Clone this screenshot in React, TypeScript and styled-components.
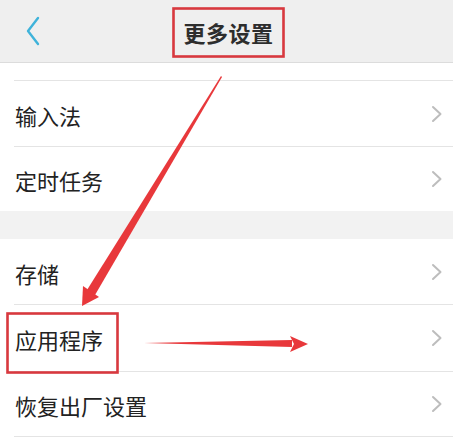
import React from "react";
import styled, { createGlobalStyle } from "styled-components";

const Global = createGlobalStyle`
  html, body { margin: 0; padding: 0; background: #ffffff; }
  body { font-family: "Noto Sans CJK SC", "Noto Sans", sans-serif; }
  * { box-sizing: border-box; }
`;

const Page = styled.div`
  position: relative;
  width: 453px;
  height: 439px;
  overflow: hidden;
  background: #ffffff;
`;

const Header = styled.header`
  height: 63px;
  background: #efefef;
  border-bottom: 1px solid #dcdcdc;
  display: flex;
  align-items: center;
  justify-content: center;
  position: relative;
`;

const Back = styled.button`
  position: absolute;
  left: 18px;
  top: 14px;
  width: 30px;
  height: 34px;
  border: none;
  background: transparent;
  padding: 0;
  display: flex;
  align-items: center;
  justify-content: center;
`;

const Title = styled.h1`
  margin: 0;
  margin-top: 1px;
  margin-left: 4px;
  font-size: 22px;
  font-weight: 700;
  color: #2d2d2d;
  letter-spacing: 0.5px;
`;

const Group = styled.section`
  background: #ffffff;
  padding-left: 14px;
`;

const Spacer = styled.div<{ $h: number }>`
  height: ${(p) => p.$h}px;
  background: ${(p) => (p.$h > 20 ? "#f2f2f2" : "#ffffff")};
`;

const Row = styled.div<{ $h: number; $last?: boolean; $first?: boolean }>`
  height: ${(p) => p.$h}px;
  display: flex;
  align-items: center;
  justify-content: space-between;
  padding-right: 9px;
  border-top: ${(p) => (p.$first ? "none" : "1px solid #e4e4e4")};
  ${(p) => (p.$last ? "border-bottom: 1px solid #e4e4e4;" : "")}
`;

const Label = styled.span`
  font-size: 22px;
  color: #222222;
  padding-left: 1px;
  margin-top: 2px;
`;

const Chevron = () => (
  <svg width="14" height="20" viewBox="0 0 14 20">
    <path d="M3 3 L10.5 10 L3 17" fill="none" stroke="#bdbdbd" strokeWidth="2" strokeLinecap="round" strokeLinejoin="round" />
  </svg>
);

const Overlay = styled.svg`
  position: absolute;
  left: 0;
  top: 0;
  pointer-events: none;
`;

export default function App() {
  return (
    <Page>
      <Global />
      <Header>
        <Back aria-label="返回">
          <svg width="20" height="30" viewBox="0 0 20 30">
            <path d="M15 2 L5 15 L15 28" fill="none" stroke="#3fb3da" strokeWidth="2.4" strokeLinecap="round" strokeLinejoin="round" />
          </svg>
        </Back>
        <Title>更多设置</Title>
      </Header>
      <Spacer $h={17} />
      <Group>
        <Row $h={66}><Label>输入法</Label><Chevron /></Row>
        <Row $h={65}><Label>定时任务</Label><Chevron /></Row>
      </Group>
      <Spacer $h={28} />
      <Group>
        <Row $h={65} $first><Label>存储</Label><Chevron /></Row>
        <Row $h={67}><Label>应用程序</Label><Chevron /></Row>
        <Row $h={66} $last><Label>恢复出厂设置</Label><Chevron /></Row>
      </Group>
      <Overlay width="453" height="439" viewBox="0 0 453 439">
        <rect x="173.5" y="8.5" width="110" height="48" fill="none" stroke="#d8383e" strokeWidth="2.6" />
        <rect x="7.5" y="313.5" width="110" height="59" fill="none" stroke="#d8383e" strokeWidth="2.6" />
        <polygon points="221,76 222,77 95,295 87,290" fill="#e8383b" />
        <polygon points="82,306 83,286 99,297" fill="#e8383b" />
        <polygon points="144,343 292,340 292,347" fill="#e8383b" />
        <polygon points="308,344 290,336 294,344 290,352" fill="#e8383b" />
      </Overlay>
    </Page>
  );
}
